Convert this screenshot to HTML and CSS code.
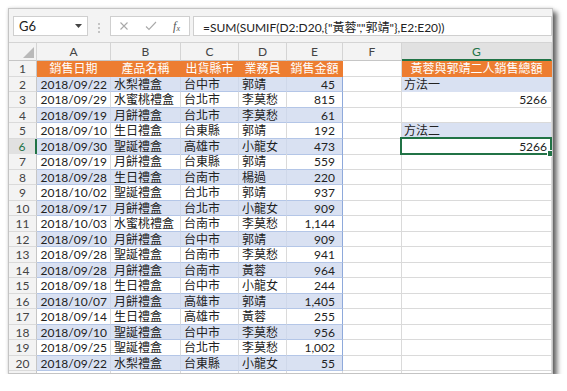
FILE: index.html
```html
<!DOCTYPE html>
<html lang="zh-Hant">

<head>
  <meta charset="UTF-8">
  <meta name="viewport" content="width=device-width, initial-scale=1.0">
  <title>黃蓉與郭靖二人銷售總額</title>
  <link rel="stylesheet" href="styles.css">
</head>

<body>
  <div class="window">

    <!-- name box + formula bar -->
    <div class="toolbar">
      <div class="name-box">
        <span>G6</span>
        <svg class="drop" width="7" height="4" viewBox="0 0 7 4"><path d="M0 0h7L3.5 4z" fill="#444"/></svg>
      </div>
      <svg class="grip" width="4" height="12" viewBox="0 0 4 12">
        <circle cx="2" cy="2" r="1" fill="#b4b4b4"/>
        <circle cx="2" cy="6" r="1" fill="#b4b4b4"/>
        <circle cx="2" cy="10" r="1" fill="#b4b4b4"/>
      </svg>
      <div class="fx-box">
        <svg class="icon" width="10" height="10" viewBox="0 0 10 10"><path d="M1.5 1.5l7 7M8.5 1.5l-7 7" stroke="#a9a9a9" stroke-width="1.1" fill="none"/></svg>
        <svg class="icon" width="12" height="10" viewBox="0 0 12 10"><path d="M1 5.5l3 3L11 1" stroke="#a9a9a9" stroke-width="1.1" fill="none"/></svg>
        <span class="fx">f<sub>x</sub></span>
      </div>
      <div class="formula">=SUM(SUMIF(D2:D20,{"黃蓉","郭靖"},E2:E20))</div>
    </div>

    <div class="sheet">
      <div class="row head">
        <div class="corner"><svg width="11" height="11" viewBox="0 0 11 11"><path d="M11 0v11H0z" fill="#b9b9b9"/></svg></div>
        <div class="ch">A</div>
        <div class="ch">B</div>
        <div class="ch">C</div>
        <div class="ch">D</div>
        <div class="ch">E</div>
        <div class="ch">F</div>
        <div class="ch on">G</div>
      </div>

      <div class="row">
        <div class="rh">1</div>
        <div class="t th">銷售日期</div>
        <div class="t th">產品名稱</div>
        <div class="t th">出貨縣市</div>
        <div class="t th">業務員</div>
        <div class="t th">銷售金額</div>
        <div class="c"></div>
        <div class="c th">黃蓉與郭靖二人銷售總額</div>
      </div>

      <div class="row band">
        <div class="rh">2</div>
        <div class="t d">2018/09/22</div>
        <div class="t">水梨禮盒</div>
        <div class="t">台中市</div>
        <div class="t">郭靖</div>
        <div class="t n">45</div>
        <div class="c"></div>
        <div class="c lab">方法一</div>
      </div>

      <div class="row">
        <div class="rh">3</div>
        <div class="t d">2018/09/29</div>
        <div class="t">水蜜桃禮盒</div>
        <div class="t">台北市</div>
        <div class="t">李莫愁</div>
        <div class="t n">815</div>
        <div class="c"></div>
        <div class="c total">5266</div>
      </div>

      <div class="row band">
        <div class="rh">4</div>
        <div class="t d">2018/09/19</div>
        <div class="t">月餅禮盒</div>
        <div class="t">台北市</div>
        <div class="t">李莫愁</div>
        <div class="t n">61</div>
        <div class="c"></div>
        <div class="c"></div>
      </div>

      <div class="row">
        <div class="rh">5</div>
        <div class="t d">2018/09/10</div>
        <div class="t">生日禮盒</div>
        <div class="t">台東縣</div>
        <div class="t">郭靖</div>
        <div class="t n">192</div>
        <div class="c"></div>
        <div class="c lab">方法二</div>
      </div>

      <div class="row band">
        <div class="rh on">6</div>
        <div class="t d">2018/09/30</div>
        <div class="t">聖誕禮盒</div>
        <div class="t">高雄市</div>
        <div class="t">小龍女</div>
        <div class="t n">473</div>
        <div class="c"></div>
        <div class="c total sel">5266</div>
      </div>

      <div class="row">
        <div class="rh">7</div>
        <div class="t d">2018/09/19</div>
        <div class="t">月餅禮盒</div>
        <div class="t">台東縣</div>
        <div class="t">郭靖</div>
        <div class="t n">559</div>
        <div class="c"></div>
        <div class="c"></div>
      </div>

      <div class="row band">
        <div class="rh">8</div>
        <div class="t d">2018/09/28</div>
        <div class="t">生日禮盒</div>
        <div class="t">台南市</div>
        <div class="t">楊過</div>
        <div class="t n">220</div>
        <div class="c"></div>
        <div class="c"></div>
      </div>

      <div class="row">
        <div class="rh">9</div>
        <div class="t d">2018/10/02</div>
        <div class="t">聖誕禮盒</div>
        <div class="t">台北市</div>
        <div class="t">郭靖</div>
        <div class="t n">937</div>
        <div class="c"></div>
        <div class="c"></div>
      </div>

      <div class="row band">
        <div class="rh">10</div>
        <div class="t d">2018/09/17</div>
        <div class="t">月餅禮盒</div>
        <div class="t">台北市</div>
        <div class="t">小龍女</div>
        <div class="t n">909</div>
        <div class="c"></div>
        <div class="c"></div>
      </div>

      <div class="row">
        <div class="rh">11</div>
        <div class="t d">2018/10/03</div>
        <div class="t">水蜜桃禮盒</div>
        <div class="t">台南市</div>
        <div class="t">李莫愁</div>
        <div class="t n">1,144</div>
        <div class="c"></div>
        <div class="c"></div>
      </div>

      <div class="row band">
        <div class="rh">12</div>
        <div class="t d">2018/09/10</div>
        <div class="t">月餅禮盒</div>
        <div class="t">台中市</div>
        <div class="t">郭靖</div>
        <div class="t n">909</div>
        <div class="c"></div>
        <div class="c"></div>
      </div>

      <div class="row">
        <div class="rh">13</div>
        <div class="t d">2018/09/28</div>
        <div class="t">聖誕禮盒</div>
        <div class="t">台南市</div>
        <div class="t">李莫愁</div>
        <div class="t n">941</div>
        <div class="c"></div>
        <div class="c"></div>
      </div>

      <div class="row band">
        <div class="rh">14</div>
        <div class="t d">2018/09/28</div>
        <div class="t">月餅禮盒</div>
        <div class="t">台南市</div>
        <div class="t">黃蓉</div>
        <div class="t n">964</div>
        <div class="c"></div>
        <div class="c"></div>
      </div>

      <div class="row">
        <div class="rh">15</div>
        <div class="t d">2018/09/18</div>
        <div class="t">生日禮盒</div>
        <div class="t">台中市</div>
        <div class="t">小龍女</div>
        <div class="t n">244</div>
        <div class="c"></div>
        <div class="c"></div>
      </div>

      <div class="row band">
        <div class="rh">16</div>
        <div class="t d">2018/10/07</div>
        <div class="t">月餅禮盒</div>
        <div class="t">高雄市</div>
        <div class="t">郭靖</div>
        <div class="t n">1,405</div>
        <div class="c"></div>
        <div class="c"></div>
      </div>

      <div class="row">
        <div class="rh">17</div>
        <div class="t d">2018/09/14</div>
        <div class="t">生日禮盒</div>
        <div class="t">高雄市</div>
        <div class="t">黃蓉</div>
        <div class="t n">255</div>
        <div class="c"></div>
        <div class="c"></div>
      </div>

      <div class="row band">
        <div class="rh">18</div>
        <div class="t d">2018/09/10</div>
        <div class="t">聖誕禮盒</div>
        <div class="t">台中市</div>
        <div class="t">李莫愁</div>
        <div class="t n">956</div>
        <div class="c"></div>
        <div class="c"></div>
      </div>

      <div class="row">
        <div class="rh">19</div>
        <div class="t d">2018/09/25</div>
        <div class="t">聖誕禮盒</div>
        <div class="t">台北市</div>
        <div class="t">李莫愁</div>
        <div class="t n">1,002</div>
        <div class="c"></div>
        <div class="c"></div>
      </div>

      <div class="row band">
        <div class="rh">20</div>
        <div class="t d">2018/09/22</div>
        <div class="t">水梨禮盒</div>
        <div class="t">台東縣</div>
        <div class="t">小龍女</div>
        <div class="t n">55</div>
        <div class="c"></div>
        <div class="c"></div>
      </div>

      <!-- next row, only its top edge is visible -->
      <div class="row">
        <div class="rh"></div>
        <div class="c"></div>
        <div class="c"></div>
        <div class="c"></div>
        <div class="c"></div>
        <div class="c"></div>
        <div class="c"></div>
        <div class="c"></div>
      </div>
    </div>

  </div>
</body>

</html>
```

FILE: styles.css
```css
body {
  margin: 0;
  background: #fff;
  font-family: Lato, "Noto Sans CJK TC", sans-serif;
  color: #222;
}

.window {
  margin: 8px 0 0 8px;
  width: 545px;
  height: 366px;
  border: 1px solid #c4c4c4;
  box-sizing: border-box;
  background: #fff;
  overflow: hidden;
  box-shadow: 4px 4px 5px rgba(0, 0, 0, 0.6), 0 0 3px rgba(0, 0, 0, 0.15);
}

/* ---------- formula bar ---------- */

.toolbar {
  height: 34px;
  box-sizing: border-box;
  padding: 7px 0 0 4px;
  background: #f3f3f3;
  border-bottom: 1px solid #d4d4d4;
  display: flex;
  align-items: flex-start;
}

.name-box,
.fx-box,
.formula {
  height: 20px;
  box-sizing: border-box;
  border: 1px solid #cfcfcf;
  background: #fff;
  display: flex;
  align-items: center;
}

.name-box {
  width: 75px;
  padding: 0 5px;
  justify-content: space-between;
  font-size: 13px;
  color: #222;
}

.grip {
  margin: 6px 9px 0 9px;
}

.fx-box {
  width: 80px;
  padding: 0 9px 0 8px;
  justify-content: space-between;
}

.fx {
  font-family: "Liberation Serif", serif;
  font-style: italic;
  font-size: 12px;
  color: #555;
  line-height: 1;
}

.fx sub {
  font-size: 8px;
  vertical-align: -1px;
}

.formula {
  flex: 1;
  margin-left: 3px;
  padding-left: 9px;
  font-size: 12px;
  color: #222;
  white-space: nowrap;
}

/* ---------- grid ---------- */

.row {
  display: grid;
  grid-template-columns: 28px 74px 70px 58px 48px 56px 59px 150px;
  height: 15.5px;
}

.row > div {
  box-sizing: border-box;
  border-right: 1px solid #dadada;
  border-bottom: 1px solid #dadada;
  padding: 0 3px;
  font-size: 12px;
  line-height: 15px;
  white-space: nowrap;
  overflow: hidden;
}

.row.head {
  height: 18px;
}

.row.head > div {
  background: #f3f3f3;
  border-right-color: #d4d4d4;
  border-bottom-color: #c6c6c6;
  text-align: center;
  color: #444;
  line-height: 17px;
}

.corner {
  display: flex;
  align-items: flex-end;
  justify-content: flex-end;
  padding: 0 2px 2px 0 !important;
}

.row.head > .ch.on {
  background: #e1e1e1;
  color: #217346;
  border-bottom: 2px solid #217346;
}

.row > .rh {
  background: #f3f3f3;
  border-right-color: #c6c6c6;
  border-bottom-color: #dadada;
  text-align: center;
  color: #444;
  font-size: 12px;
  padding: 0;
}

.row > .rh.on {
  background: #e1e1e1;
  color: #217346;
  border-right: 2px solid #217346;
}

/* table A1:E20 */
.row > .t {
  border-bottom-color: #b4c6e7;
}

.row.band > .t {
  background: #d9e1f2;
  border-right-color: #cfd8ea;
}

.row > .th {
  background: #ed7d31;
  border-color: #ed7d31;
  color: #fff;
  text-align: center;
}

.row > .d {
  text-align: right;
  padding-right: 3px;
}

.row > .n {
  text-align: right;
  padding-right: 7px;
  border-right-color: #8ea9db;
}

.row.band > .n {
  border-right-color: #8ea9db;
}

/* summary column G */
.row > .lab {
  background: #d9e1f2;
  border-bottom-color: #d9e1f2;
  padding-left: 2px;
}

.row > .total {
  text-align: right;
  padding-right: 4px;
}

.sel {
  position: relative;
  overflow: visible !important;
}

.sel::after {
  content: "";
  position: absolute;
  left: -2px;
  top: -2px;
  right: -1px;
  bottom: -1px;
  border: 2px solid #217346;
}

.sel::before {
  content: "";
  position: absolute;
  right: -3px;
  bottom: -3px;
  width: 5px;
  height: 5px;
  background: #217346;
  border: 1px solid #fff;
  z-index: 1;
}
```
